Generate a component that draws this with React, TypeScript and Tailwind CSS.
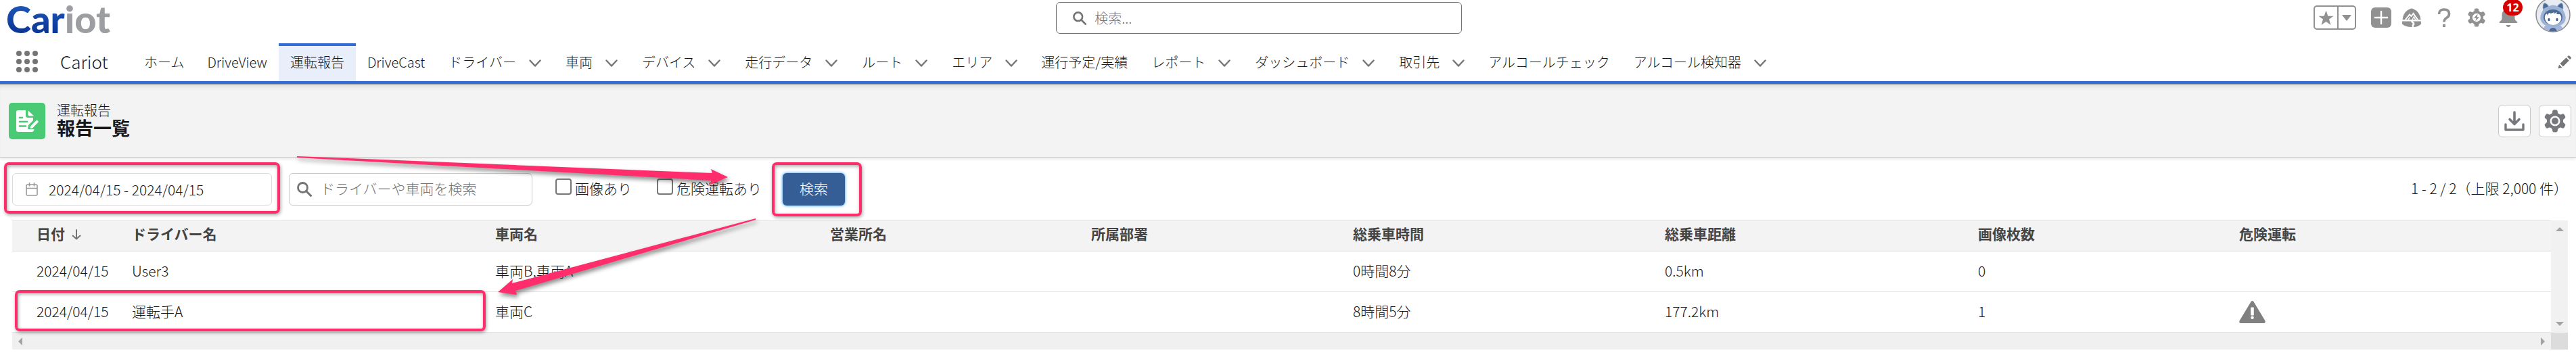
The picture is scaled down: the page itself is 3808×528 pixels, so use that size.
import React, { useState } from 'react';

const navLinks = [
  { name: "ホーム", link: "#home" },
  { name: "DriveView", link: "#driveview" },
  { name: "運転報告", link: "#reports", active: true },
  { name: "DriveCast", link: "#drivecast" },
  { name: "ドライバー", link: "#drivers", menu: true },
  { name: "車両", link: "#vehicles", menu: true },
  { name: "デバイス", link: "#devices", menu: true },
  { name: "走行データ", link: "#data", menu: true },
  { name: "ルート", link: "#routes", menu: true },
  { name: "エリア", link: "#areas", menu: true },
  { name: "運行予定/実績", link: "#plans" },
  { name: "レポート", link: "#analytics", menu: true },
  { name: "ダッシュボード", link: "#dashboards", menu: true },
  { name: "取引先", link: "#accounts", menu: true },
  { name: "アルコールチェック", link: "#alcohol" },
  { name: "アルコール検知器", link: "#detectors", menu: true },
];

const columns = [
  { name: "日付", width: "w-[165px]" },
  { name: "ドライバー名", width: "w-[537px]" },
  { name: "車両名", width: "w-[495px]" },
  { name: "営業所名", width: "w-[386px]" },
  { name: "所属部署", width: "w-[387px]" },
  { name: "総乗車時間", width: "w-[461px]" },
  { name: "総乗車距離", width: "w-[463px]" },
  { name: "画像枚数", width: "w-[386px]" },
  { name: "危険運転", width: "" },
];

const reports = [
  { date: "2024/04/15", driver: "User3", car: "車両B,車両A", time: "0時間8分", distance: "0.5km", images: 0, danger: false },
  { date: "2024/04/15", driver: "運転手A", car: "車両C", time: "8時間5分", distance: "177.2km", images: 1, danger: true },
];

const SearchIcon = ({ className }: { className: string }) => (
  <svg viewBox="0 0 22 22" className={className} fill="none" stroke="currentColor" aria-hidden="true">
    <circle cx="8.5" cy="8.5" r="7" strokeWidth="2.8" />
    <path d="M13.5 13.5 20.5 20.5" strokeWidth="3" strokeLinecap="round" />
  </svg>
);

const ChevronIcon = () => (
  <svg viewBox="0 0 18 12" className="w-[18px] h-3 text-[#747474]" fill="none" stroke="currentColor" aria-hidden="true">
    <path d="M1.5 1.5 9 9.5 16.5 1.5" strokeWidth="2.4" strokeLinecap="round" strokeLinejoin="round" />
  </svg>
);

// six-tooth cog, the hole is filled by children
const CogIcon = ({ className, hole, children }: { className: string; hole: string; children: React.ReactNode }) => (
  <svg viewBox="-17 -17 34 34" className={className} fill="currentColor" aria-hidden="true">
    {[0, 60, 120, 180, 240, 300].map((angle) => (
      <path key={angle} transform={`rotate(${angle})`} d="M-6.500 -10 C-4 -11 -4 -12 -3.800 -14.500 Q-3.500 -16.500 -1.500 -16.500 H1.500 Q3.500 -16.500 3.800 -14.500 C4 -12 4 -11 6.500 -10 L0 0Z" />
    ))}
    <circle r="11.500" />
    <circle r="7.500" fill={hole} />
    {children}
  </svg>
);

const Avatar = () => (
  <svg viewBox="0 0 52 52" className="w-[52px] h-[52px]" aria-hidden="true">
    <defs>
      <clipPath id="avatar-clip"><circle cx="26" cy="26" r="24.500" /></clipPath>
    </defs>
    <circle cx="26" cy="26" r="25" fill="#e8ebf2" stroke="#8c8c8c" strokeWidth="1.500" />
    <g clipPath="url(#avatar-clip)">
      <path d="M10 54 Q11 41 19 40 H33 Q41 41 42 54Z" fill="#a3b8d9" />
      <path d="M11 19 Q10 9 13 8 Q17 8 20 13 Q26 10 32 13 Q36 8 39 8 Q42 9 41 19 Q48 31 42 38 Q36 44 26 44 Q16 44 10 38 Q4 31 11 19Z" fill="#9db3d6" />
      <path d="M11.500 17 Q11 10 13.500 9 Q17 9.500 19 13.500Z" fill="#4d6a94" />
      <path d="M40.500 17 Q41 10 38.500 9 Q35 9.500 33 13.500Z" fill="#4d6a94" />
      <ellipse cx="26" cy="29.500" rx="14" ry="11.500" fill="#4d6a94" />
      <path d="M14 32 Q13 26 17 24 L18 27 L20 23 L23 24 L28 22 L27 24.500 L32 22 L31 25 L36 25 Q39 28 38 33 Q35 41 26 41 Q17 41 14 32Z" fill="#fff" />
      <ellipse cx="20" cy="33" rx="1.600" ry="2.200" fill="#3f6295" />
      <ellipse cx="32" cy="33" rx="1.600" ry="2.200" fill="#3f6295" />
      <path d="M20 51 Q21 45 26 45 Q31 45 32 51Z" fill="#4d6a94" />
    </g>
  </svg>
);

const GlobalHeader = () => (
  <header className="flex h-16 items-start">
    <div className="w-[41%] pl-[9px]">
      <a href="#top" className="block font-['Lato'] font-black text-[56px] leading-[56px]">
        <span className="bg-gradient-to-b from-[#2460c4] to-[#082c8a] bg-clip-text text-transparent">Car</span>
        <span className="text-[#9c9ea1]">iot</span>
      </a>
    </div>
    <label className="mt-[3px] flex h-[47px] w-[600px] items-center gap-3 rounded-[6px] border border-[#747474] pl-6 text-[#747474]">
      <SearchIcon className="w-5 h-5" />
      <input type="search" aria-label="検索" placeholder="検索..." className="flex-1 bg-transparent outline-none placeholder:text-[#747474]" />
    </label>
    <div className="ml-auto flex items-center pr-2 text-[#919191]">
      <div className="mt-1 flex h-9 rounded-[5px] border-2 border-[#919191]">
        <button aria-label="お気に入り" className="flex w-[35px] items-center justify-center border-r-2 border-[#919191]">
          <svg viewBox="0 0 24 24" className="w-[23px] h-[23px]" fill="currentColor">
            <path d="M12 0.500 15 9H23.500L16.700 14.200 19.300 23 12 17.700 4.700 23 7.300 14.200 0.500 9H9Z" />
          </svg>
        </button>
        <button aria-label="お気に入りリスト" className="flex w-6 items-center justify-center">
          <svg viewBox="0 0 14 9" className="w-[14px] h-[9px]" fill="currentColor"><path d="M0 0H14L7 9Z" /></svg>
        </button>
      </div>
      <button aria-label="新規" className="ml-[22px] mt-1">
        <svg viewBox="0 0 30 30" className="w-[30px] h-[30px]">
          <rect width="30" height="30" rx="6" fill="currentColor" />
          <path d="M15 6V24M6 15H24" stroke="#fff" strokeWidth="2.500" strokeLinecap="round" />
        </svg>
      </button>
      <button aria-label="ガイダンスセンター" className="ml-4 mt-1">
        <svg viewBox="0 0 28 28" className="w-7 h-7" fill="currentColor">
          <path d="M0.500 17 Q2 5 11 1.500 Q14 -0.500 17 1.500 Q26 5 27.500 17Z" />
          <path d="M5 17 11 9.500 13.500 12 16.500 8 23 17" fill="none" stroke="#fff" strokeWidth="2" />
          <path d="M9 17 11.500 13.500 M15 17 17.500 12.500 19.500 17" fill="none" stroke="#fff" strokeWidth="1.300" />
          <path d="M0 19.500H13 Q14 22 16 23 Q13.500 25 15 28 Q5 28 0 23.500Z" />
          <path d="M16 19.500H28V23.500 Q23 28 17 28 Q16.500 26 18.500 24 Q18.500 21.500 16 19.500Z" />
        </svg>
      </button>
      <button aria-label="ヘルプ" className="ml-6 mt-1">
        <svg viewBox="0 0 20 28" className="w-5 h-7" fill="none" stroke="currentColor">
          <path d="M2.500 9 Q2.500 2 10 2 Q17.500 2 17.500 8.500 Q17.500 12.500 13.500 14.500 Q10 16.500 10 20.500" strokeWidth="3.600" />
          <rect x="8" y="24" width="4" height="4" fill="currentColor" stroke="none" />
        </svg>
      </button>
      <button aria-label="設定" className="ml-6 mt-1">
        <CogIcon className="w-7 h-7" hole="#fff">
          <path d="M2 -6.500 -5 1H-0.500L-2 6.500 5 -1H1Z" />
        </CogIcon>
      </button>
      <button aria-label="通知 12件" className="relative ml-[19px] mt-1">
        <svg viewBox="0 0 28 28" className="w-7 h-7" fill="currentColor">
          <path d="M4.500 11 Q4.500 1 14 1 Q23.500 1 23.500 11 V15 Q23.500 18 27 20 Q28 22 26.500 22 H1.500 Q0 22 1 20 Q4.500 18 4.500 15Z" />
          <path d="M10.500 25H17.500 Q16.500 28 14 28 Q11.500 28 10.500 25Z" />
        </svg>
        <span className="absolute -top-[13px] left-[6px] flex h-6 w-[29px] items-center justify-center rounded-full bg-[#d60000] font-['Open_Sans'] text-[16px] font-bold text-white">12</span>
      </button>
      <button aria-label="プロファイル" className="-mt-1 ml-[26px]"><Avatar /></button>
    </div>
  </header>
);

const MenuBar = () => (
  <nav className="flex h-[62px] items-stretch border-b-2 border-[#bcb9b9]">
    <div className="flex flex-1 items-stretch border-b-4 border-[#316bd6]">
      <button aria-label="アプリケーションランチャー" className="ml-6 mt-[11px] grid h-8 w-8 grid-cols-3 gap-1">
        {Array.from({ length: 9 }, (_, index) => (
          <span key={index} className="h-2 w-2 rounded-full bg-[#747474]" />
        ))}
      </button>
      <span className="ml-[33px] w-[107px] text-[26px] leading-[54px]">Cariot</span>
      <ul className="flex items-stretch">
        {navLinks.map((item) => (
          <li
            key={item.name}
            className={`flex items-center gap-[19px] border-t-4 ${item.menu ? "px-[18px]" : "px-[17px]"} ${item.active ? "border-[#316bd6] bg-[#e8effb]" : "border-transparent"}`}
          >
            <a href={item.link} className="whitespace-nowrap pb-1">{item.name}</a>
            {item.menu && <button aria-label={`${item.name} メニュー`}><ChevronIcon /></button>}
          </li>
        ))}
      </ul>
      <button aria-label="ナビゲーションを編集" className="ml-auto mr-[7px] text-[#747474]">
        <svg viewBox="0 0 20 20" className="w-5 h-5" fill="currentColor">
          <path d="M0.500 19.500 2 13.500 6.500 18Z" />
          <path d="M3.500 12 12.500 3.200 16.800 7.500 7.800 16.500Z" />
          <path d="M14 2 15.500 0.500 Q16.500 -0.300 17.500 0.700 L19.300 2.500 Q20.300 3.500 19.500 4.500 L18 6Z" />
        </svg>
      </button>
    </div>
  </nav>
);

const PageHeader = () => (
  <section className="flex h-[107px] items-center border-b border-[#c9c9c9] bg-[#f3f3f3] pb-1 pl-[13px] pr-[7px] pt-1 shadow-[inset_0_6px_6px_-4px_rgba(0,0,0,0.1),0_2px_4px_rgba(0,0,0,0.1)]">
    <span className="flex h-[54px] w-[54px] items-center justify-center rounded-[5px] bg-[#4bca76]">
      <svg viewBox="0 0 34 34" className="w-[34px] h-[34px]" aria-hidden="true">
        <path d="M4 1H15V9Q15 12 18 12H26V16L19 23 18 29H27L27.500 29Q27 33 24 33H4Q1 33 1 30V4Q1 1 4 1Z" fill="#fff" />
        <path d="M18.500 1.500 27 9.500H20.500Q18.500 9.500 18.500 7.500Z" fill="#fff" />
        <path d="M6 12H10M6 18H17M6 24.500H15" stroke="#4bca76" strokeWidth="2.600" strokeLinecap="round" />
        <path d="M22 27.500 22.500 24.500 31.500 16 33.500 18 25 27Z" fill="#fff" stroke="#fff" strokeLinejoin="round" />
      </svg>
    </span>
    <div className="ml-[17px] pb-1">
      <p className="leading-6">運転報告</p>
      <h1 className="text-[27px] font-bold leading-7">報告一覧</h1>
    </div>
    <div className="ml-auto flex gap-3 text-[#76787d]">
      <button aria-label="ダウンロード" className="flex h-12 w-12 items-center justify-center rounded-[6px] border border-[#c9c9c9] bg-white">
        <svg viewBox="0 0 30 30" className="w-[30px] h-[30px]" fill="none" stroke="currentColor" strokeLinecap="round" strokeLinejoin="round">
          <path d="M15 2V17M8 12.500 15 19.500 22 12.500" strokeWidth="3.600" />
          <path d="M2 20V28H28V20" strokeWidth="3.400" />
        </svg>
      </button>
      <button aria-label="表示設定" className="flex h-12 w-12 items-center justify-center rounded-[6px] border border-[#c9c9c9] bg-white">
        <CogIcon className="w-[34px] h-[34px]" hole="#fff"><circle r="5" /></CogIcon>
      </button>
    </div>
  </section>
);

const Filters = () => {
  const [images, setImages] = useState(false);
  const [danger, setDanger] = useState(false);

  return (
    <form className="flex h-12 items-center" onSubmit={(e) => e.preventDefault()}>
      <div className="relative h-12 w-[384px]">
        <label className="flex h-12 items-center gap-4 rounded-[6px] border border-[#dddbda] pl-[19px]">
          <svg viewBox="0 0 18 20" className="w-[18px] h-5 text-[#999]" fill="none" stroke="currentColor" strokeWidth="1.600" aria-hidden="true">
            <rect x="1" y="3" width="16" height="16" rx="2" />
            <path d="M1 8.500H17M5.500 0V5.500M12.500 0V5.500" />
          </svg>
          <input type="text" aria-label="期間" defaultValue="2024/04/15 - 2024/04/15" className="min-w-0 flex-1 bg-transparent outline-none" />
        </label>
        <div className="pointer-events-none absolute -inset-x-3 -top-4 -bottom-3 rounded-[7px] border-4 border-[#ff2d6b] shadow-[1px_2px_5px_rgba(0,0,0,0.35),inset_1px_2px_5px_rgba(0,0,0,0.35)]" />
      </div>
      <label className="ml-[25px] flex h-12 w-[360px] items-center gap-[13px] rounded-[6px] border border-[#c9c9c9] pl-[11px] text-[#747474]">
        <SearchIcon className="w-[22px] h-[22px]" />
        <input type="search" aria-label="ドライバーや車両を検索" placeholder="ドライバーや車両を検索" className="min-w-0 flex-1 bg-transparent pb-1 outline-none placeholder:text-[#747474]" />
      </label>
      <label className="ml-[34px] flex w-[115px] gap-[5px] pb-1">
        <input type="checkbox" checked={images} onChange={() => setImages(!images)} className="h-6 w-6 appearance-none rounded-[4px] border-2 border-[#767676] bg-white checked:bg-[#355e96]" />
        <span className="whitespace-nowrap leading-7">画像あり</span>
      </label>
      <label className="ml-[35px] flex w-[186px] gap-[5px] pb-1">
        <input type="checkbox" checked={danger} onChange={() => setDanger(!danger)} className="h-6 w-6 appearance-none rounded-[4px] border-2 border-[#767676] bg-white checked:bg-[#355e96]" />
        <span className="whitespace-nowrap leading-7">危険運転あり</span>
      </label>
      <div className="relative">
        <button type="submit" className="h-12 w-[92px] rounded-[6px] bg-[#355e96] pb-1 text-white shadow-[0_0_4px_#1b96ff]">検索</button>
        <div className="pointer-events-none absolute -left-4 -right-[25px] -top-4 -bottom-4 rounded-[7px] border-4 border-[#ff2d6b] shadow-[1px_2px_5px_rgba(0,0,0,0.35),inset_1px_2px_5px_rgba(0,0,0,0.35)]" />
      </div>
      <p className="ml-auto whitespace-nowrap pb-1">1 - 2 / 2（上限 2,000 件）</p>
    </form>
  );
};

const ReportTable = () => (
  <div className="mt-[22px] grid grid-cols-[1fr_25px]">
    <table className="w-full table-fixed border-collapse text-left">
      <thead>
        <tr className="h-[45px] border-y border-[#e3e3e3] bg-[#f3f3f3] text-[#444]">
          {columns.map((column, index) => (
            <th key={column.name} scope="col" className={`pb-2 pl-3 font-bold first:pl-9 ${column.width}`}>
              <span className="flex items-center gap-[10px] whitespace-nowrap">
                {column.name}
                {index === 0 && (
                  <svg viewBox="0 0 14 16" className="mt-1 w-[14px] h-4" fill="none" stroke="#747474" strokeWidth="2" strokeLinecap="round" aria-hidden="true">
                    <path d="M7 1V14.500M1.500 9.500 7 14.500 12.500 9.500" />
                  </svg>
                )}
              </span>
            </th>
          ))}
        </tr>
      </thead>
      <tbody>
        {reports.map((report) => (
          <tr key={report.driver} className="h-[60px] border-b border-[#e3e3e3]">
            <td className="pb-1 pl-9">{report.date}</td>
            <td className="pb-1 pl-3">{report.driver}</td>
            <td className="pb-1 pl-3">{report.car}</td>
            <td />
            <td />
            <td className="pb-1 pl-3">{report.time}</td>
            <td className="pb-1 pl-3">{report.distance}</td>
            <td className="pb-1 pl-3">{report.images}</td>
            <td className="pl-3">
              {report.danger && (
                <svg viewBox="0 0 39 33" className="h-[33px] w-[39px]" role="img" aria-label="危険運転あり">
                  <path d="M17.500 1.200 Q19.500 -1 21.500 1.200 L38.500 29.500 Q39.500 33 36.500 33 H2.500 Q-0.500 33 0.500 29.500Z" fill="#808080" />
                  <rect x="17.200" y="9.500" width="4.600" height="12" rx="1" fill="#fff" />
                  <circle cx="19.500" cy="24.800" r="2.300" fill="#fff" />
                </svg>
              )}
            </td>
          </tr>
        ))}
      </tbody>
    </table>
    <div className="flex flex-col items-center justify-between bg-[#f1f1f1] py-[10px] text-[#a3a3a3]">
      <svg viewBox="0 0 12 6" className="w-3 h-[6px]" fill="currentColor"><path d="M0 6 6 0 12 6Z" /></svg>
      <svg viewBox="0 0 12 6" className="w-3 h-[6px]" fill="currentColor"><path d="M0 0 6 6 12 0Z" /></svg>
    </div>
    <div className="flex h-[25px] items-center justify-between bg-[#f0f0f0] px-[9px] text-[#a3a3a3]">
      <svg viewBox="0 0 6 12" className="w-[6px] h-3" fill="currentColor"><path d="M6 0 0 6 6 12Z" /></svg>
      <svg viewBox="0 0 6 12" className="w-[6px] h-3" fill="currentColor"><path d="M0 0 6 6 0 12Z" /></svg>
    </div>
    <div className="bg-[#dcdcdc]" />
  </div>
);

const App = () => (
  <div className="bg-white font-['Noto_Sans_CJK_JP',sans-serif] text-[20px] font-light leading-6 text-[#181818]">
    <GlobalHeader />
    <MenuBar />
    <PageHeader />
    <main className="relative pb-2 pl-[18px] pr-3 pt-[23px] text-[21px]">
      <Filters />
      <ReportTable />
      <div className="pointer-events-none absolute left-[22px] top-[196px] h-[61px] w-[696px] rounded-[7px] border-4 border-[#ff2d6b] shadow-[1px_2px_5px_rgba(0,0,0,0.35),inset_1px_2px_5px_rgba(0,0,0,0.35)]" />
      <svg viewBox="430 223 700 220" className="pointer-events-none absolute -top-[10px] left-[430px] h-[220px] w-[700px] drop-shadow-[2px_4px_3px_rgba(0,0,0,0.45)]" fill="#ff2d6b" aria-hidden="true">
        <path d="M439 231 1053 256 1051 250 1076 262 1050 273 1051 267 439 233Z" />
        <path d="M1117 323 757 419 758 413 736 432 764 436 762 430 1117 325Z" />
      </svg>
    </main>
  </div>
);

export default App;
